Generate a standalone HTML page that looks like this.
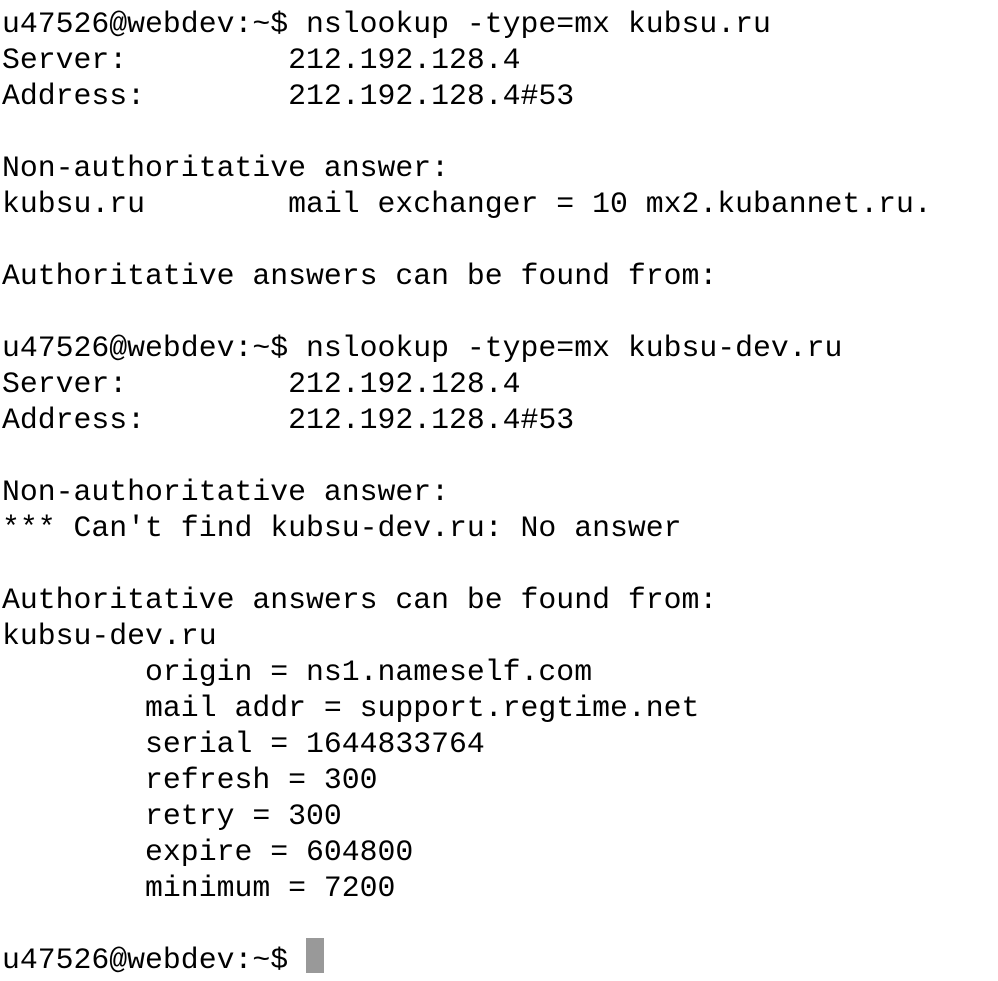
<!DOCTYPE html>
<html><head><meta charset="utf-8"><style>
html,body{margin:0;padding:0;background:#fff;width:998px;height:981px;overflow:hidden}
pre{margin:0;position:absolute;left:2px;top:6px;font-family:"Liberation Mono",monospace;font-size:29.8px;line-height:36px;color:#000}
.cur{display:inline-block;width:18px;height:35px;background:#999;vertical-align:top;margin-top:-4px}
</style></head><body><pre>u47526@webdev:~$ nslookup -type=mx kubsu.ru
Server:         212.192.128.4
Address:        212.192.128.4#53

Non-authoritative answer:
kubsu.ru        mail exchanger = 10 mx2.kubannet.ru.

Authoritative answers can be found from:

u47526@webdev:~$ nslookup -type=mx kubsu-dev.ru
Server:         212.192.128.4
Address:        212.192.128.4#53

Non-authoritative answer:
*** Can't find kubsu-dev.ru: No answer

Authoritative answers can be found from:
kubsu-dev.ru
        origin = ns1.nameself.com
        mail addr = support.regtime.net
        serial = 1644833764
        refresh = 300
        retry = 300
        expire = 604800
        minimum = 7200

u47526@webdev:~$ <span class="cur"></span></pre></body></html>
